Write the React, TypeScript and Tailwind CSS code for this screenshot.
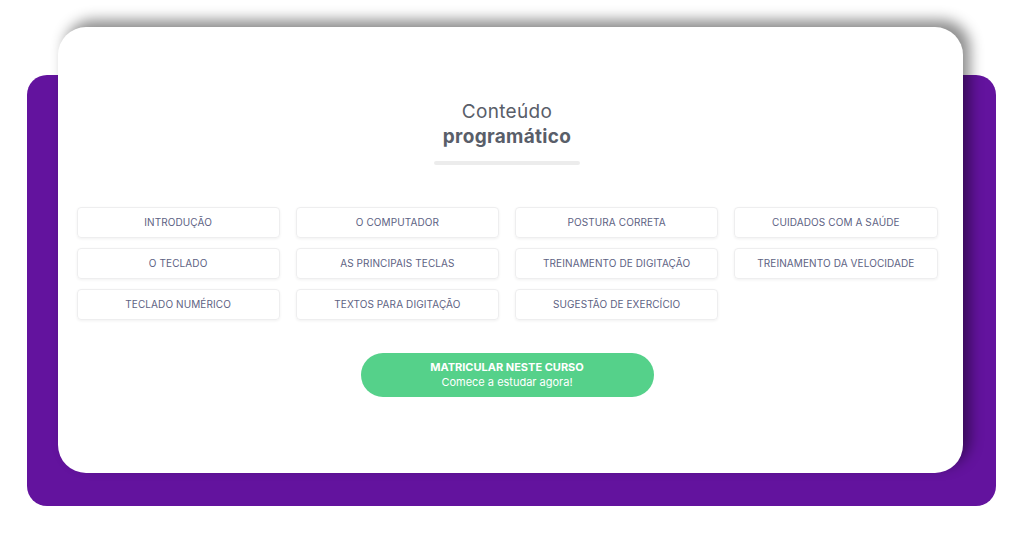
import React from 'react';

const topics: string[] = [
  'INTRODUÇÃO',
  'O COMPUTADOR',
  'POSTURA CORRETA',
  'CUIDADOS COM A SAÚDE',
  'O TECLADO',
  'AS PRINCIPAIS TECLAS',
  'TREINAMENTO DE DIGITAÇÃO',
  'TREINAMENTO DA VELOCIDADE',
  'TECLADO NUMÉRICO',
  'TEXTOS PARA DIGITAÇÃO',
  'SUGESTÃO DE EXERCÍCIO',
];

export default function App() {
  return (
    <div className="w-[1024px] h-[536px] bg-white pt-[75px] pl-[27px] font-['Inter','Open_Sans',sans-serif]">
      {/* purple backdrop, card sits on top of it */}
      <div className="w-[969px] bg-[#63139e] rounded-[20px] h-[431px] pl-[31px] pr-[33px]">
        <div className="-translate-y-[48px] bg-white rounded-[28px] h-[446px] shadow-[7px_-7px_14px_rgba(0,0,0,0.45)] flex flex-col items-center pt-[72px] pr-[7px]">
          <h2 className="text-center text-[#595e69] leading-[25px]">
            <span className="block text-[19px] font-normal tracking-[0.3px]">Conteúdo</span>
            <span className="block text-[19px] font-bold tracking-[0.3px]">programático</span>
          </h2>
          <div className="mt-[12px] w-[146px] h-[4px] rounded-full bg-[#ececec]" />

          <div className="mt-[42px] grid grid-cols-4 gap-x-[16px] gap-y-[10px] w-[861px]">
            {topics.map((t) => (
              <div
                key={t}
                className="h-[31px] flex items-center justify-center rounded-[4px] border border-[#eeeeef] shadow-[0_1px_3px_rgba(0,0,0,0.06)] text-[10px] text-[#5d6283] tracking-[0.1px]"
              >
                {t}
              </div>
            ))}
          </div>

          <button className="mt-[33px] w-[293px] h-[44px] rounded-full bg-[#55d18a] text-white flex flex-col items-center justify-center">
            <span className="text-[11px] font-bold leading-[15px]">MATRICULAR NESTE CURSO</span>
            <span className="text-[11px] leading-[15px]">Comece a estudar agora!</span>
          </button>
        </div>
      </div>
    </div>
  );
}
